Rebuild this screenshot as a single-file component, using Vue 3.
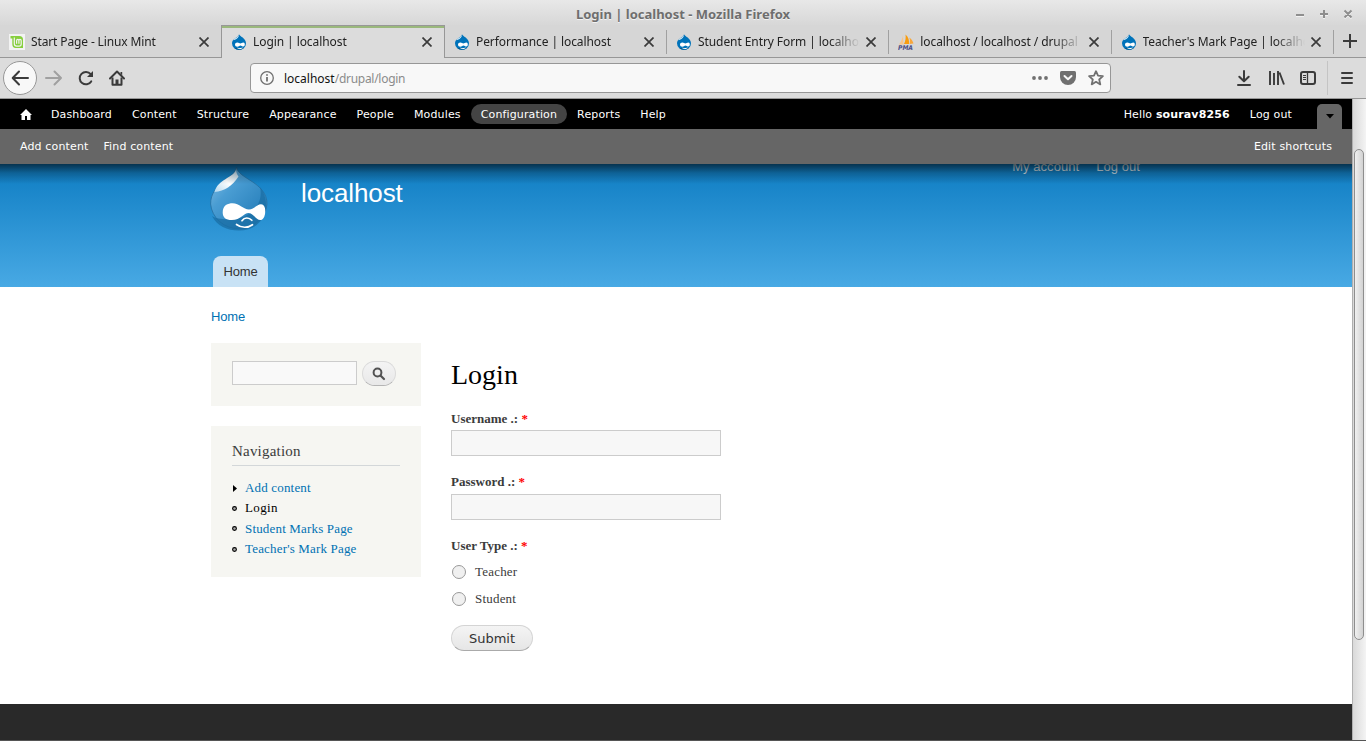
<script setup>
const tabs = [
  { title: 'Start Page - Linux Mint', icon: 'mint' },
  { title: 'Login | localhost', icon: 'drupal', active: true },
  { title: 'Performance | localhost', icon: 'drupal' },
  { title: 'Student Entry Form | localhost', icon: 'drupal' },
  { title: 'localhost / localhost / drupal |', icon: 'pma' },
  { title: "Teacher's Mark Page | localhost", icon: 'drupal' },
]
const adminLinks = ['Dashboard', 'Content', 'Structure', 'Appearance', 'People', 'Modules', 'Configuration', 'Reports', 'Help']
const navLinks = [
  { text: 'Add content', marker: 'collapsed' },
  { text: 'Login', marker: 'leaf', active: true },
  { text: 'Student Marks Page', marker: 'leaf' },
  { text: "Teacher's Mark Page", marker: 'leaf' },
]
</script>

<template>
  <div class="window">
    <header class="titlebar">
      <span class="window-title">Login | localhost - Mozilla Firefox</span>
      <div class="window-buttons">
        <svg width="60" height="14" viewBox="0 0 60 14" fill="none" stroke="#8e8e8e" stroke-width="2">
          <path d="M1 8h8M25 7h8M29 3v8M49.500 3.500l7 7M56.500 3.500l-7 7" />
        </svg>
      </div>
    </header>

    <nav class="tabs">
      <div v-for="tab in tabs" :key="tab.title" class="tab" :class="{ active: tab.active }">
        <svg v-if="tab.icon === 'drupal'" class="favicon" width="16" height="16" viewBox="0 0 16 16">
          <path d="M8 .2C8.500 2.300 15 4 15 9.300A6.900 6.500 0 0 1 1 9.300C1 4.500 7.500 3.500 8 .2z" fill="#0073ba" />
          <path d="M7.600 1.200C7 3.300 3.500 4 2.500 6.200c1.800-.4 4.300-1.500 5.300-4z" fill="#d8eaf5" />
          <path d="M3.200 14h9.700c-2.500 2-7.200 2-9.700 0z" fill="#00598e" />
          <path d="M4 10.800c0-1.700 1.100-2.400 2.400-2.400 1.400 0 2 1 3 1 .9 0 1.700-1 2.900-1 1.100 0 1.500.9 1.500 2.200 0 1.300-.6 2-1.500 2-1 0-1.900-1.200-2.900-1.200-1 0-1.700 1.300-3.100 1.300-1.300 0-2.300-.7-2.300-1.900z" fill="#fff" />
          <path d="M6.500 14.100c1.200.7 3.600.7 5-.2" stroke="#fff" fill="none" />
        </svg>
        <svg v-else-if="tab.icon === 'mint'" class="favicon" width="16" height="16" viewBox="0 0 16 16">
          <path d="M0 0h16v16H0z" fill="#f3f3f3" />
          <path d="M1.500 2h8.800Q14 2 14 5.600V14H6.700Q3.300 14 3.300 10.300V4.500H1.500z" fill="#87cf3e" />
          <path d="M5.300 3.500v6.200q0 2.400 2.300 2.400h2.500q2.100 0 2.100-2.100V6.700q0-1.300-1.150-1.300T9.900 6.700v3.100M9.900 9.800V6.700q0-1.300-1.150-1.300T7.600 6.700v3.100" fill="none" stroke="#f3f3f3" stroke-width="1.200" />
        </svg>
        <svg v-else class="favicon" width="16" height="16" viewBox="0 0 16 16">
          <path d="M1 10.500C3 7.500 4.500 4.500 5 1.500l.5 9z" fill="#f7c58c" />
          <path d="M6 10C7.500 7 8 3.500 7.500.500 10.500 3 11.500 7 11 10z" fill="#f89c0e" />
          <path d="M11.500 10c.8-2.500.5-4.500-.2-6.500C13.500 5 15 7.500 15.500 9.500z" fill="#f8a63a" />
          <text x="0" y="15.500" class="pma-text" textLength="15" lengthAdjust="spacingAndGlyphs">PMA</text>
        </svg>
        <span class="tab-title">{{ tab.title }}</span>
        <svg class="tab-close" width="10" height="10" viewBox="0 0 10 10" stroke="#3b3b3b" stroke-width="1.700">
          <path d="M.5.5l9 9M9.500.500l-9 9" />
        </svg>
      </div>
      <div class="new-tab">
        <svg width="14" height="14" viewBox="0 0 14 14" stroke="#3b3b3b" stroke-width="2"><path d="M0 7h14M7 0v14" /></svg>
      </div>
    </nav>

    <div class="navbar">
      <div class="back">
        <svg width="18" height="16" viewBox="0 0 18 16" fill="none" stroke="#3b3b3b" stroke-width="2"><path d="M2 8h15M8 1.500L1.700 8 8 14.500" stroke-linejoin="round" stroke-linecap="round" /></svg>
      </div>
      <svg class="forward" width="18" height="16" viewBox="0 0 18 16" fill="none" stroke="#a0a0a0" stroke-width="2"><path d="M1 8h15M9.500 1.500L16 8l-6.500 6.500" stroke-linejoin="round" stroke-linecap="round" /></svg>
      <svg class="reload" width="16" height="16" viewBox="0 0 16 16" fill="none" stroke="#3b3b3b" stroke-width="2">
        <path d="M13.200 11.400A6.200 6.200 0 1 1 12.700 4.200" stroke-linecap="round" /><path d="M15 1v6H9z" fill="#3b3b3b" stroke="none" />
      </svg>
      <svg class="home" width="16" height="16" viewBox="0 0 16 16" fill="none" stroke="#3b3b3b" stroke-width="2">
        <path d="M1 8.500L8 1.500l7 7" stroke-linecap="round" stroke-linejoin="round" /><path d="M3.500 7.500v7.300h9V7.500" stroke-linejoin="round" /><path d="M6.500 15V9.500h3V15z" fill="#3b3b3b" stroke="none" /><path d="M11.500 2h1.700v3.500l-1.700-1.700z" fill="#3b3b3b" stroke="none" />
      </svg>
      <div class="urlbar">
        <svg width="14" height="14" viewBox="0 0 14 14" fill="none" stroke="#707070"><circle cx="7" cy="7" r="6.300" stroke-width="1.300" /><path d="M7 6v4.500M7 3.300v1.500" stroke-width="1.800" /></svg>
        <span class="url">localhost<span>/drupal/login</span></span>
        <svg class="dots" width="16" height="4" viewBox="0 0 16 4" fill="#707070"><circle cx="2" cy="2" r="1.900" /><circle cx="8" cy="2" r="1.900" /><circle cx="14" cy="2" r="1.900" /></svg>
        <svg class="pocket" width="16" height="14" viewBox="0 0 16 14"><path d="M1.500 0h13Q16 0 16 1.500V6A8 8 0 0 1 0 6V1.500Q0 0 1.500 0z" fill="#707070" /><path d="M4.500 5L8 8.300 11.500 5" fill="none" stroke="#f8f8f8" stroke-width="2" stroke-linecap="round" stroke-linejoin="round" /></svg>
        <svg class="star" width="16" height="16" viewBox="0 0 16 16" fill="none" stroke="#707070" stroke-width="1.800" stroke-linejoin="round"><path d="M8 1.200l2 4.500 4.900.5-3.700 3.300 1.100 4.900L8 11.800l-4.300 2.600 1.100-4.900L1.100 6.200 6 5.700z" /></svg>
      </div>
      <svg class="download" width="14" height="16" viewBox="0 0 14 16" fill="none" stroke="#3b3b3b" stroke-width="2"><path d="M7 1v10M2.300 6.700L7 11.300l4.700-4.600" stroke-linecap="round" stroke-linejoin="round" /><path d="M1 15h12" stroke-linecap="round" /></svg>
      <svg class="library" width="16" height="14" viewBox="0 0 16 14" fill="none" stroke="#3b3b3b" stroke-width="1.900"><path d="M1 0v14M5 2v12M9 0v14M10.500 1.500L15 13.500" /></svg>
      <svg class="sidebar-icon" width="16" height="14" viewBox="0 0 16 14" fill="none" stroke="#3b3b3b"><rect x="1" y="1" width="14" height="12" rx="2" stroke-width="2" /><path d="M7.500 1v12" stroke-width="1.300" /><path d="M3 4.500h3M3 6.500h3M3 8.500h3" /></svg>
      <div class="menu-button">
        <svg width="12" height="12" viewBox="0 0 12 12" stroke="#3b3b3b" stroke-width="2" stroke-linecap="round"><path d="M1 1h10M1 6h10M1 11h10" /></svg>
      </div>
    </div>

    <div class="viewport">
      <div class="page">
        <div class="admin">
          <div class="admin-menu">
            <svg class="admin-home" width="12" height="11" viewBox="0 0 12 11"><path d="M6 0l6 6h-1.500v5H7V7H5v4H1.500V6H0z" fill="#fff" /></svg>
            <a v-for="link in adminLinks" :key="link" :class="{ current: link === 'Configuration' }">{{ link }}</a>
            <span class="hello">Hello <b>sourav8256</b></span>
            <span class="logout">Log out</span>
            <span class="drawer-toggle"><svg width="8" height="5" viewBox="0 0 8 5"><path d="M0 0h8L4 4.500z" fill="#000" /></svg></span>
          </div>
          <div class="shortcuts">
            <span>Add content</span><span>Find content</span><span class="edit">Edit shortcuts</span>
          </div>
        </div>

        <div class="banner">
          <div class="banner-shade"></div>
          <svg class="logo" width="58" height="66" viewBox="0 0 58 66">
            <defs>
              <linearGradient id="drop" x1="0" y1="0" x2="1" y2="1"><stop offset="0" stop-color="#8ec4e6" /><stop offset=".35" stop-color="#4a9dd3" /><stop offset=".7" stop-color="#3087c1" /><stop offset="1" stop-color="#1f75ad" /></linearGradient>
              <linearGradient id="shine" x1="1" y1="0" x2="0" y2="1"><stop offset="0" stop-color="#bcdcef" /><stop offset=".5" stop-color="#fff" /><stop offset="1" stop-color="#b5d9ef" /></linearGradient>
            </defs>
            <path d="M26.500 0C28 12 57 15 57 37A28.300 27 0 0 1 .6 37C.6 16 24 13 26.500 0z" fill="url(#drop)" stroke="#276fa0" stroke-width=".8" />
            <path d="M50 20c4 17-9 31-27 32-9 .500-17 0-21-3 5 10 15 14.500 27 14.500C45 63.500 56 53 56 38c0-7-2-13-6-18z" fill="#1a6da4" opacity=".75" />
            <path d="M26 3C23 11 8 12 4.500 25c10-1 18-6 24-15.500-1.500-2-2.200-4-2.500-6.500z" fill="url(#shine)" />
            <path d="M12.700 45.500C12.700 38 18 36.200 22.500 36.200c7 0 11 6.300 16.500 6.300 5 0 8-5.300 12-5.300 3.300 0 4.500 3.600 4.200 8-.3 4.500-2 7.800-5 7.800-4 0-7-7-11.500-7-5 0-8 7-17 7-6 0-9-2.500-9-7.500z" fill="#fff" />
            <path d="M32 53.700c2.500-3.500 7-3.500 9.800-.4M26.500 57.500c5 3.800 11.500 3.500 16 .2" fill="none" stroke="#fff" stroke-width="1.700" stroke-linecap="round" />
          </svg>
          <span class="site-name">localhost</span>
          <div class="account"><span>My account</span><span>Log out</span></div>
          <a class="home-tab">Home</a>
        </div>

        <main class="content">
          <div class="breadcrumb">Home</div>
          <div class="columns">
            <aside>
              <section class="block search">
                <div class="search-field"></div>
                <div class="search-button"><svg width="14" height="14" viewBox="0 0 14 14" fill="none" stroke="#525252"><circle cx="5.500" cy="5.500" r="3.900" stroke-width="2" /><path d="M8.700 8.700l3.300 3.300" stroke-width="2.200" stroke-linecap="round" /></svg></div>
              </section>
              <section class="block navigation">
                <h2>Navigation</h2>
                <ul>
                  <li v-for="item in navLinks" :key="item.text" :class="{ active: item.active }">
                    <svg v-if="item.marker === 'collapsed'" width="5" height="7" viewBox="0 0 5 7"><path d="M1 0l4 3.500L1 7z" /></svg>
                    <svg v-else width="5" height="5" viewBox="0 0 5 5"><circle cx="2.500" cy="2.500" r="1.900" fill="#aaa" stroke="#000" stroke-width="1.100" /></svg>
                    <span>{{ item.text }}</span>
                  </li>
                </ul>
              </section>
            </aside>

            <form class="login">
              <h1>Login</h1>
              <label class="label">Username .: <em>*</em></label>
              <div class="field"></div>
              <label class="label second">Password .: <em>*</em></label>
              <div class="field"></div>
              <label class="label third">User Type .: <em>*</em></label>
              <div class="option"><i></i>Teacher</div>
              <div class="option"><i></i>Student</div>
              <div class="submit">Submit</div>
            </form>
          </div>
        </main>
        <footer class="footer"></footer>
      </div>
      <div class="scrollbar"><div class="thumb"></div></div>
    </div>
    <div class="window-edge"></div>
  </div>
</template>

<style>
html, body { margin: 0; overflow: hidden; }
</style>

<style scoped>
* { box-sizing: border-box; }
svg { display: block; flex: none; }
.window { width: 1366px; height: 741px; display: flex; flex-direction: column; background: #dcdcdc; font: 12px "Noto Sans", sans-serif; overflow: hidden; }
.titlebar { height: 25px; flex: none; background: linear-gradient(#e8e8e8, #d7d7d7); display: flex; justify-content: center; position: relative; }
.window-title { font-weight: 700; font-size: 13px; line-height: 29px; color: #6e6e6e; text-shadow: 0 1px #f2f2f2; white-space: nowrap; }
.window-buttons { position: absolute; right: 11px; top: 7px; filter: drop-shadow(0 1px #f2f2f2); }

.tabs { height: 33px; flex: none; display: flex; background: #d6d6d6; border-bottom: 1px solid #979797; }
.tab { width: 222.300px; height: 32px; flex: none; display: flex; align-items: center; padding: 2px 13px 0 9px; position: relative; color: #222; }
.tab:first-child { width: 221px; padding-right: 12px; }
.tab:not(.active):not(:first-child)::after { content: ""; position: absolute; right: 0; top: 5px; width: 1px; height: 24px; background: #a0a0a0; }
.tab.active { width: 224px; height: 33px; margin-bottom: -1px; background: #dcdcdc; border: 1px solid #979797; border-bottom: 0; padding: 0 12px 0 9px; box-shadow: inset 0 2px #9ab87c; }
.tab.active + .tab { width: 222px; }
.favicon { margin-right: 6px; }
.tab-title { flex: 1; min-width: 0; overflow: hidden; white-space: nowrap; font-size: 12px; line-height: 20px; margin-right: 6px; letter-spacing: -.08px; mask-image: linear-gradient(to right, #000 calc(100% - 30px), transparent); }
.tab:first-child .tab-title { letter-spacing: -.13px; }
.pma-text { font: italic bold 6.500px "DejaVu Sans", sans-serif; fill: #4c4f86; }
.new-tab { padding: 9px 0 0 9px; }

.navbar { height: 41px; flex: none; display: flex; align-items: center; border-bottom: 1px solid #979797; padding-left: 3px; background: #dcdcdc; }
.back { width: 34px; height: 34px; border: 1px solid #979797; border-radius: 50%; background: #f8f8f8; display: flex; align-items: center; justify-content: center; }
.forward { margin-left: 8px; }
.reload { margin-left: 15px; }
.home { margin-left: 15px; }
.urlbar { width: 861px; height: 30px; margin-left: 125px; border: 1px solid #979797; border-radius: 4px; background: #f8f8f8; display: flex; align-items: center; padding: 0 6px 0 9px; }
.url { margin-left: 10px; flex: 1; font-size: 12px; color: #111; }
.url span { color: #8b8b8b; letter-spacing: -.28px; }
.pocket { margin-left: 12px; }
.star { margin-left: 12px; }
.download { margin-left: 126px; }
.library { margin-left: 18px; }
.sidebar-icon { margin-left: 15px; }
.menu-button { margin-left: 11px; height: 34px; border-left: 1px solid #c4c4c4; padding: 11px 0 0 13px; }

.viewport { height: 641px; display: flex; }
.page { width: 1352px; background: #fff; display: flex; flex-direction: column; }
.admin { font: 11px "DejaVu Sans", sans-serif; color: #fff; flex: none; letter-spacing: .14px; }
.admin-menu { height: 30px; background: #000; display: flex; align-items: center; padding: 0 10px 0 20px; }
.admin-home { margin-right: 9px; }
.admin-menu a { padding: 0 10px; height: 20px; line-height: 21px; border-radius: 10px; }
.admin-menu a.current { background: #444; }
.hello { margin-left: auto; }
.logout { margin-left: 20px; }
.drawer-toggle { margin-left: 25px; width: 25px; height: 25px; align-self: flex-end; background: #666; border-radius: 5px 5px 0 0; display: flex; align-items: center; justify-content: center; }
.shortcuts { height: 35px; background: #666; display: flex; gap: 15px; align-items: center; padding: 0 20px; }
.edit { margin-left: auto; }

.banner { height: 123px; flex: none; background: linear-gradient(#0e7dc3, #48a9e4); display: grid; grid-template-columns: 58px 1fr auto; grid-template-rows: 92px 31px; padding: 0 212px 0 210px; position: relative; overflow: hidden; font-family: "Liberation Sans", sans-serif; }
.banner-shade { position: absolute; left: 0; top: 0; width: 100%; height: 20px; background: linear-gradient(rgba(0,0,0,.6), rgba(0,0,0,.24) 45%, rgba(0,0,0,0)); z-index: 2; }
.logo { margin-top: 3px; }
.site-name { margin-left: 33px; color: #fff; font-size: 26px; letter-spacing: -.1px; line-height: 58px; }
.account { display: flex; gap: 17px; font-size: 13px; line-height: 15px; color: #d5e4ee; margin-top: -5px; letter-spacing: .06px; }
.home-tab { grid-row: 2; margin-left: 3px; width: 55px; height: 31px; line-height: 31px; text-align: center; background: #c8e2f5; border-radius: 8px 8px 0 0; font-size: 13px; letter-spacing: -.15px; color: #333; }

.content { height: 417px; flex: none; padding: 19px 0 0 211px; font-family: "Liberation Serif", serif; }
.breadcrumb { height: 37px; font: 13px/21px "Liberation Sans", sans-serif; letter-spacing: -.15px; color: #0071b3; }
.columns { display: flex; gap: 30px; }
aside { width: 210px; display: flex; flex-direction: column; gap: 20px; }
.block { background: #f6f6f2; padding: 18px 21px; }
.search { height: 63px; display: flex; gap: 5px; }
.search-field { width: 125px; height: 24px; border: 1px solid #ccc; background: #f9f9f9; }
.search-button { width: 34px; height: 25px; border: 1px solid #dadada; border-bottom-color: #b4b4b4; border-radius: 13px; background: linear-gradient(#f4f4f4, #e8e8e8); display: flex; justify-content: center; align-items: center; }
.navigation { height: 151px; padding-top: 15px; }
h2 { margin: 0 0 12px; font-weight: 400; font-size: 15px; line-height: 20px; height: 25px; border-bottom: 1px solid #d3d7d9; color: #3b3b3b; letter-spacing: .2px; }
ul { list-style: none; margin: 0; padding: 0; }
li { display: flex; align-items: center; height: 20.300px; line-height: 20px; gap: 8px; font-size: 13px; letter-spacing: .17px; color: #0071b3; }
li.active { color: #000; letter-spacing: .35px; }
.login { width: 270px; padding-top: 15px; color: #3b3b3b; font-size: 13px; }
h1 { margin: 0 0 18px; font-weight: 400; font-size: 28px; line-height: 34px; color: #000; }
.label { display: block; height: 20px; line-height: 18px; font-weight: 700; }
.label em { color: #f00; font-style: normal; }
.field { width: 270px; height: 26px; border: 1px solid #ccc; background: #f7f7f7; }
.second { margin-top: 17px; height: 21px; }
.third { margin-top: 17px; height: 21px; }
.option { display: flex; align-items: center; height: 27px; gap: 9px; letter-spacing: .2px; }
.option i { width: 14px; height: 14px; margin-left: 1px; border: 1px solid #999; border-radius: 50%; background: #f0f0f0; }
.submit { margin-top: 13px; width: 82px; height: 26px; line-height: 25px; border: 1px solid #d4d4d4; border-bottom-color: #aaa; border-radius: 13px; background: linear-gradient(#f4f4f4, #e6e6e6); text-align: center; font-family: "DejaVu Sans", sans-serif; font-size: 13px; color: #333; }
.footer { flex: 1; background: #292929; }
.scrollbar { width: 14px; padding: 50px 2px 0 1px; border-left: 1px solid #b0b0b0; background: linear-gradient(to right, #d9d9d9, #f4f4f4); }
.thumb { height: 491px; width: 10px; border: 1px solid #8e8e8e; border-radius: 5px; background: linear-gradient(to right, #f0f0f0, #d2d2d2); }
.window-edge { height: 1px; background: #555; }
</style>
